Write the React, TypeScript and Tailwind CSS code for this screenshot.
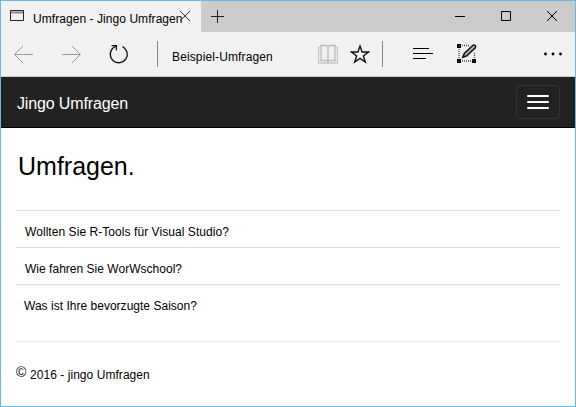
import type { ReactNode } from "react";

type IconProps = { x: number; y: number; w: number; h: number; className?: string; children: ReactNode };

function Icon({ x, y, w, h, className = "", children }: IconProps) {
  return (
    <svg
      width={w}
      height={h}
      viewBox={`${x} ${y} ${w} ${h}`}
      fill="none"
      stroke="#111"
      className={`block shrink-0 ${className}`}
    >
      {children}
    </svg>
  );
}

function TitleBar() {
  return (
    <div className="flex h-[31px] bg-[#cccccc]">
      <div className="flex w-[200px] shrink-0 bg-[#f1f1f1]">
        <Icon x={9} y={8} w={16} h={16} className="ml-2 mt-[7px]">
          <path d="M10.5 10.5h13v10h-13z" stroke="#222" />
          <path d="M11 12.5h12" stroke="#888" strokeWidth="2" />
        </Icon>
        <span className="ml-2 mt-[10px] w-[145px] shrink-0 whitespace-nowrap text-[12px] leading-4 tracking-[0.06px]">
          Umfragen - Jingo Umfragen
        </span>
        <Icon x={178} y={9} w={14} h={14} className="mt-2">
          <path d="M180 11l10 10M190 11l-10 10" stroke="#333" />
        </Icon>
      </div>
      <Icon x={210} y={9} w={16} h={16} className="ml-[9px] mt-2">
        <path d="M211 16.5h13M217.5 10v13" stroke="#222" />
      </Icon>
      <Icon x={454} y={9} w={12} h={14} className="ml-[228px] mt-2">
        <path d="M455 16.5h10" stroke="#000" />
      </Icon>
      <Icon x={500} y={9} w={12} h={14} className="ml-[34px] mt-2">
        <path d="M501.500 11.500h9v9h-9z" stroke="#000" />
      </Icon>
      <Icon x={546} y={9} w={12} h={14} className="ml-[34px] mt-2">
        <path d="M547 11l10 10M557 11l-10 10" stroke="#000" />
      </Icon>
    </div>
  );
}

function Toolbar() {
  return (
    <div className="flex h-[45px] border-b border-[#cccccc] bg-[#f1f1f1]">
      <Icon x={13} y={32} w={22} h={44} className="ml-3">
        <path d="M33 54.500H14.500M23 46l-8.500 8.500L23 63" stroke="#999" />
      </Icon>
      <Icon x={61} y={32} w={22} h={44} className="ml-[26px]">
        <path d="M62 54.500h18.500M72 46l8.500 8.500L72 63" stroke="#999" />
      </Icon>
      <Icon x={108} y={32} w={22} h={44} className="ml-[25px]">
        <path d="M122.500 46.600A8.500 8.500 0 1 1 113 48L116 46" strokeWidth="1.300" />
        <path d="M111.500 45.600h4.900v4.600" strokeWidth="1.300" />
      </Icon>
      <div className="ml-[27px] mt-[9px] h-[26px] w-px bg-[#888]" />
      <span className="ml-[14px] mt-[17px] w-[146px] shrink-0 whitespace-nowrap text-[12px] leading-4 tracking-[0.13px]">
        Beispiel-Umfragen
      </span>
      <Icon x={318} y={32} w={20} h={44}>
        <path d="M320.500 47.500h-2v15.500h19v-15.500h-2" stroke="#c6c6c6" strokeWidth="1.400" />
        <path d="M321 45.500h5q2 0 2 1.500 0-1.500 2-1.500h5v15h-5q-2 0-2 2 0-2-2-2h-5zM328 47v15" stroke="#bcbcbc" strokeWidth="1.300" />
      </Icon>
      <Icon x={350} y={32} w={20} h={44} className="ml-3">
        <path d="M360 46l2.100 6h6.300l-5 3.900 1.900 6.200-5.300-3.700-5.300 3.700 1.900-6.200-5-3.900h6.300z" strokeWidth="1.400" />
      </Icon>
      <div className="ml-3 mt-[9px] h-[26px] w-px bg-[#888]" />
      <Icon x={412} y={32} w={22} h={44} className="ml-[29px]">
        <path d="M413 48.500h16M413 53.500h20M413 58.500h13" stroke="#000" />
      </Icon>
      <Icon x={456} y={32} w={22} h={44} className="ml-[22px]">
        <path d="M462 45.500h8M462 61h10M459 49v9M474.500 53v5" stroke="#444" strokeWidth="1.300" strokeDasharray="1 1" />
        <path d="M457 44h4v4h-4zM457 59h4v4h-4zM472 59h4v4h-4z" fill="#000" stroke="none" />
        <path d="M459 45.500v1M459 60.500v1M474 60.500v1" stroke="#777" />
        <path d="M462.800 57.200l1.500-3.800 8.600-8.100q1.200-.8 2.200.2t.2 2.200l-8.500 8.100z" fill="#b5b5b5" strokeWidth="1.500" />
      </Icon>
      <Icon x={543} y={32} w={21} h={44} className="ml-[65px]">
        <g fill="#000" stroke="none">
          <circle cx="545.500" cy="54" r="1.400" />
          <circle cx="553" cy="54" r="1.400" />
          <circle cx="560.500" cy="54" r="1.400" />
        </g>
      </Icon>
    </div>
  );
}

function Navbar() {
  return (
    <nav className="flex h-[51px] items-start justify-between border-b border-black bg-[#222222] pl-4 pr-[15px]">
      <span className="mt-[17px] text-[16px] leading-5 tracking-[-0.14px] text-white">Jingo Umfragen</span>
      <button className="mt-2 flex h-[34px] w-11 flex-col items-center justify-center gap-1 rounded border border-[#333333]">
        <span className="h-[2px] w-[22px] rounded-[1px] bg-white" />
        <span className="h-[2px] w-[22px] rounded-[1px] bg-white" />
        <span className="h-[2px] w-[22px] rounded-[1px] bg-white" />
      </button>
    </nav>
  );
}

export default function App() {
  return (
    <div className="flex h-[407px] w-[576px] flex-col overflow-hidden border border-[#68b7e9] bg-white font-['Liberation_Sans',Arial,sans-serif] text-black">
      <TitleBar />
      <Toolbar />
      <Navbar />
      <main className="px-[15px]">
        <h1 className="ml-[2px] mt-[22px] h-[60px] text-[25px] leading-8">Umfragen.</h1>
        <ul className="text-[12px] leading-4">
          <li className="h-[37px] border-t border-[#dddddd] pl-[9px] pt-[13px]">
            <span className="tracking-[0.06px]">Wollten Sie R-Tools für Visual Studio?</span>
          </li>
          <li className="h-[37px] border-t border-[#dddddd] pl-[9px] pt-[13px]">
            <span className="tracking-[0.02px]">Wie fahren Sie WorWschool?</span>
          </li>
          <li className="h-[57px] border-t border-[#dddddd] pl-2 pt-[13px]">
            <span className="tracking-[0.02px]">Was ist Ihre bevorzugte Saison?</span>
          </li>
        </ul>
        <footer className="flex border-t border-[#eeeeee] pt-[22px]">
          <span className="w-[14px] text-[14px] leading-4">©</span>
          <span className="mt-[3px] text-[12px] leading-4 tracking-[0.05px]">2016 - jingo Umfragen</span>
        </footer>
      </main>
    </div>
  );
}
